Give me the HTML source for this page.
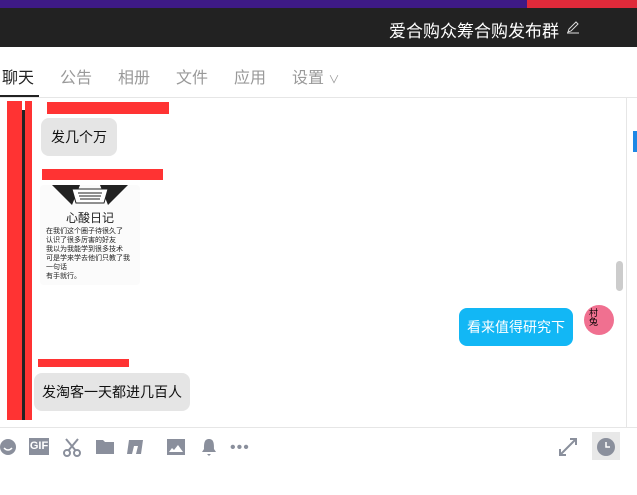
<html><head><style>
body{margin:0;width:637px;height:495px;position:relative;overflow:hidden;background:#fff;font-family:"Liberation Sans","Noto Sans CJK SC",sans-serif}
.a{position:absolute}
.tab{position:absolute;top:64px;font-size:16px;color:#999}
.bub{position:absolute;background:#e5e5e5;border-radius:8px;font-size:14px;color:#111;line-height:38px;padding:0 10px}
.ic{position:absolute;top:437px;width:20px;height:20px;fill:#8a8f9c}
</style></head><body>
<div class="a" style="left:0;top:0;width:637px;height:8px;background:#3e1a86"></div>
<div class="a" style="left:527px;top:0;width:110px;height:8px;background:#e02a3a"></div>
<div class="a" style="left:0;top:8px;width:637px;height:39px;background:#222"></div>
<div class="a" style="left:389px;top:17px;font-size:17px;color:#fff">爱合购众筹合购发布群</div>
<svg class="a" style="left:566px;top:20px" width="14" height="14" viewBox="0 0 14 14"><path d="M2 12 L3 9 L10 2 L12 4 L5 11 Z M1 13 H13" stroke="#ddd" fill="none" stroke-width="1"/></svg>
<div class="tab" style="left:2px;color:#222">聊天</div>
<div class="a" style="left:0;top:95px;width:39px;height:2px;background:#222"></div>
<div class="tab" style="left:60px">公告</div>
<div class="tab" style="left:118px">相册</div>
<div class="tab" style="left:176px">文件</div>
<div class="tab" style="left:234px">应用</div>
<div class="tab" style="left:292px">设置 <span style="font-size:11px">∨</span></div>
<div class="a" style="left:0;top:97px;width:637px;height:1px;background:#e6e6e6"></div>
<div class="a" style="left:626px;top:97px;width:1px;height:330px;background:#e6e6e6"></div>
<div class="a" style="left:633px;top:131px;width:4px;height:21px;background:#1e88e5"></div>
<div class="a" style="left:7px;top:101px;width:15px;height:319px;background:#f33"></div>
<div class="a" style="left:22px;top:110px;width:3px;height:310px;background:#222"></div>
<div class="a" style="left:25px;top:101px;width:7px;height:319px;background:#f33"></div>
<div class="a" style="left:47px;top:102px;width:122px;height:12px;background:#f33"></div>
<div class="bub" style="left:41px;top:118px">发几个万</div>
<div class="a" style="left:42px;top:169px;width:121px;height:11px;background:#f33"></div>
<div class="a" style="left:40px;top:185px;width:100px;height:100px;background:#fbfbfb;border-radius:4px;font-size:7px;line-height:9px;color:#222">
<svg class="a" style="left:10px;top:0" width="80" height="24" viewBox="0 0 80 24"><path d="M2 0 L30 0 L22 20 Z M78 0 L50 0 L58 20 Z" fill="#222"/><path d="M22 4 H58 L54 18 H26 Z" fill="#fff" stroke="#222"/><path d="M28 8 H52 M29 11 H51 M30 14 H50" stroke="#222"/></svg>
<div style="text-align:center;font-size:12px;margin-top:26px;line-height:14px">心酸日记</div>
<div style="padding-left:6px;margin-top:2px">在我们这个圈子待很久了<br>认识了很多厉害的好友<br>我以为我能学到很多技术<br>可是学来学去他们只教了我<br>一句话<br>有手就行。</div></div>
<div class="a" style="left:616px;top:261px;width:7px;height:30px;background:#ccc;border-radius:4px"></div>
<div class="bub" style="left:459px;top:308px;background:#12b7f5;color:#fff;padding:0 8px">看来值得研究下</div>
<div class="a" style="left:584px;top:305px;width:30px;height:30px;border-radius:50%;background:#f07090;font-size:9px;line-height:9px;color:#000;padding:4px 0 0 5px;box-sizing:border-box">村<br>兔</div>
<div class="a" style="left:38px;top:359px;width:91px;height:8px;background:#f33"></div>
<div class="bub" style="left:34px;top:373px;padding:0 8px">发淘客一天都进几百人</div>
<div class="a" style="left:0;top:427px;width:637px;height:1px;background:#e6e6e6"></div>
<svg class="ic" style="left:0" viewBox="0 0 20 20"><circle cx="8" cy="10" r="8"/><path d="M4 11 Q8 15 12 11" stroke="#fff" fill="none" stroke-width="1.5"/></svg>
<div class="a" style="left:29px;top:438px;width:20px;height:17px;background:#8a8f9c;color:#fff;font-size:11px;font-weight:bold;text-align:center;line-height:17px">GIF</div>
<svg class="ic" style="left:62px" viewBox="0 0 20 20"><path d="M4 2 L14 14 M16 2 L6 14" stroke="#8a8f9c" stroke-width="2"/><circle cx="5" cy="16" r="3" fill="none" stroke="#8a8f9c" stroke-width="2"/><circle cx="15" cy="16" r="3" fill="none" stroke="#8a8f9c" stroke-width="2"/></svg>
<svg class="ic" style="left:95px" viewBox="0 0 20 20"><path d="M1 3 H8 L10 5 H19 V17 H1 Z"/></svg>
<svg class="ic" style="left:126px" viewBox="0 0 20 20"><path d="M3 3 H17 L15 17 H10 L12 9 H8 L6 17 H1 Z"/></svg>
<svg class="ic" style="left:166px" viewBox="0 0 20 20"><path d="M1 2 H19 V18 H1 Z M3 15 H17 L12 8 L8 13 L6 11 Z" fill-rule="evenodd"/></svg>
<svg class="ic" style="left:199px" viewBox="0 0 20 20"><path d="M10 2 C5 2 5 7 5 12 L3 15 H17 L15 12 C15 7 15 2 10 2 Z M8 17 H12 L10 19 Z"/></svg>
<div class="a" style="left:230px;top:439px;font-size:16px;color:#8a8f9c;letter-spacing:1px">•••</div>
<svg class="ic" style="left:558px" viewBox="0 0 20 20"><path d="M2 18 L18 2 M12 2 H18 V8 M2 12 V18 H8" stroke="#8a8f9c" stroke-width="2" fill="none"/></svg>
<div class="a" style="left:592px;top:432px;width:28px;height:28px;background:#e8e8e8"></div>
<svg class="a" style="left:596px;top:437px" width="20" height="20" viewBox="0 0 20 20"><circle cx="10" cy="10" r="9" fill="#8a8f9c"/><path d="M10 5 V10 H14" stroke="#fff" stroke-width="1.5" fill="none"/></svg>
</body></html>
